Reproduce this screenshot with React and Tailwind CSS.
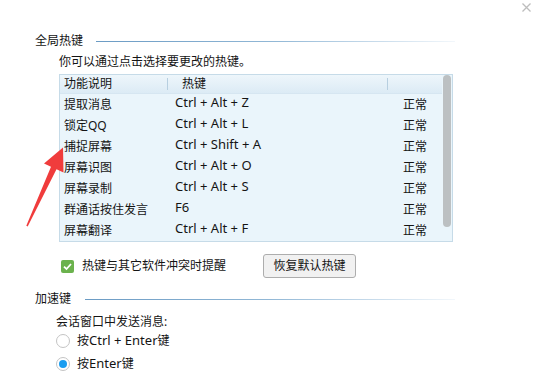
import React from "react";

const rows = [
    { name: "提取消息", key: "Ctrl + Alt + Z", state: "正常" },
    { name: "锁定QQ", key: "Ctrl + Alt + L", state: "正常" },
    { name: "捕捉屏幕", key: "Ctrl + Shift + A", state: "正常" },
    { name: "屏幕识图", key: "Ctrl + Alt + O", state: "正常" },
    { name: "屏幕录制", key: "Ctrl + Alt + S", state: "正常" },
    { name: "群通话按住发言", key: "F6", state: "正常" },
    { name: "屏幕翻译", key: "Ctrl + Alt + F", state: "正常" },
];

function SectionTitle({ children, lineClass }) {
    return (
        <div className="flex items-center h-[16px] leading-[16px]">
            <span>{children}</span>
            <div className={`h-px flex-1 mr-[79px] bg-gradient-to-r from-[#6b9bc4] via-[#92b8d6] to-[#f2f7fb] ${lineClass}`}></div>
        </div>
    );
}

export default function App() {
    return (
        <div
            className="relative w-[534px] h-[377px] bg-white overflow-hidden text-[12px] text-[#141414]"
            style={{ fontFamily: '"Noto Sans", "Noto Sans CJK SC", sans-serif' }}
        >
            {/* close */}
            <svg className="absolute left-[522px] top-[3px]" width="9" height="9" viewBox="0 0 9 9">
                <path d="M0.5 0.5 L8.5 8.5 M8.5 0.5 L0.5 8.5" stroke="#bdbdbd" strokeWidth="1.3" />
            </svg>

            <div className="pt-[33px] pl-[35px]">
                <SectionTitle lineClass="ml-[13px]">全局热键</SectionTitle>

                <div className="pl-[24px]">
                    <div className="mt-[5px] h-[16px] leading-[16px]">你可以通过点击选择要更改的热键。</div>

                    {/* table */}
                    <div className="mt-[4px] w-[394px] h-[168px] border border-[#c6dbe8] bg-[#eaf5fb] flex">
                        <div className="flex-1">
                            <div className="h-[19px] flex items-center bg-gradient-to-b from-[#eef6fb] to-[#dcebf5] border-b border-[#d6e6f1]">
                                <div className="w-[107px] pl-[4px]">功能说明</div>
                                <div className="w-px h-[12px] bg-[#b7cfe0]"></div>
                                <div className="w-[219px] pl-[14px]">热键</div>
                                <div className="w-px h-[12px] bg-[#b7cfe0]"></div>
                                <div className="flex-1"></div>
                            </div>
                            {rows.map((r) => (
                                <div key={r.name} className="h-[21px] flex items-center">
                                    <div className="w-[107px] pl-[4px] whitespace-nowrap">{r.name}</div>
                                    <div className="w-[220px] pl-[8px] -mt-[3px] text-[13px] whitespace-nowrap">{r.key}</div>
                                    <div className="flex-1 pl-[16px]">{r.state}</div>
                                </div>
                            ))}
                        </div>
                        <div className="w-[10px] pl-[1px]">
                            <div className="w-[8px] h-[152px] rounded-full bg-[#bcc0c2]"></div>
                        </div>
                    </div>

                    {/* checkbox + button */}
                    <div className="mt-[12px] flex items-center h-[24px]">
                        <div className="ml-[2px] w-[13px] h-[13px] rounded-[2px] bg-[#6bb24d] flex items-center justify-center">
                            <svg width="11" height="11" viewBox="0 0 11 11">
                                <path d="M2 5.6 L4.5 8 L9 3" fill="none" stroke="#fff" strokeWidth="1.8" />
                            </svg>
                        </div>
                        <span className="ml-[8px]">热键与其它软件冲突时提醒</span>
                        <button className="ml-[37px] w-[93px] h-[24px] border border-[#adadad] rounded-[3px] bg-[#f1f1f1] text-[12px] text-[#141414]">
                            恢复默认热键
                        </button>
                    </div>
                </div>

                <div className="mt-[13px]">
                    <SectionTitle lineClass="ml-[14px]">加速键</SectionTitle>
                </div>

                <div className="pl-[21px]">
                    <div className="mt-[7px] h-[16px] leading-[16px]">会话窗口中发送消息:</div>
                    <div className="mt-[3px] flex items-center h-[16px]">
                        <div className="w-[14px] h-[14px] rounded-full border border-[#c4c4c4] bg-white"></div>
                        <span className="ml-[7px]">按<span className="text-[13px]">Ctrl + Enter</span>键</span>
                    </div>
                    <div className="mt-[7px] flex items-center h-[16px]">
                        <div className="w-[14px] h-[14px] rounded-full border border-[#c4c4c4] bg-white flex items-center justify-center">
                            <div className="w-[8px] h-[8px] rounded-full bg-[#1a9df0]"></div>
                        </div>
                        <span className="ml-[7px]">按<span className="text-[13px]">Enter</span>键</span>
                    </div>
                </div>
            </div>

            {/* red arrow */}
            <svg className="absolute left-0 top-0" width="80" height="240" viewBox="0 0 80 240">
                <polygon
                    points="26.3,225.8 51,166.7 44,163.5 63,147.5 63.5,172.5 56.5,169.3 27.7,226.4"
                    fill="#f03c3c"
                />
            </svg>
        </div>
    );
}
